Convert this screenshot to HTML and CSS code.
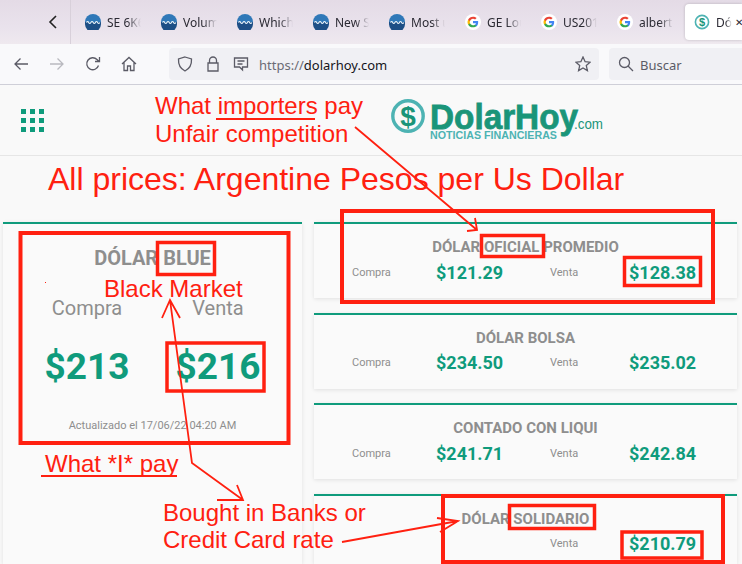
FILE: index.html
```html
<!DOCTYPE html>
<html lang="en">
<head>
  <meta charset="UTF-8">
  <title>DolarHoy</title>
  <link rel="stylesheet" href="styles.css">
</head>
<body>
  <svg width="0" height="0" class="defs">
    <symbol id="wave" viewBox="0 0 16 16">
      <circle cx="8" cy="8" r="8" fill="#2f78b8"/>
      <path d="M0 8h16v2a8 8 0 0 1-16 0z" fill="#1d4f86"/>
      <path d="M1.500 8.500q1.200-2 2.200 0t2.200 0 2.300 0 2.200 0 2.200 0 2.200 0" fill="none" stroke="#e8f4fb" stroke-width="1.200"/>
    </symbol>
    <symbol id="google" viewBox="0 0 18 18">
      <circle cx="9" cy="9" r="9" fill="#fff"/>
      <path d="M14.800 9.200c0-.4 0-.8-.1-1.200H9v2.300h3.300c-.1.800-.6 1.400-1.200 1.900v1.500h2c1.100-1.100 1.700-2.600 1.700-4.500z" fill="#4285f4"/>
      <path d="M9 15c1.600 0 3-.5 4.100-1.500l-2-1.500c-.6.400-1.300.6-2.100.6-1.600 0-2.900-1-3.400-2.500H3.500v1.600C4.500 13.700 6.600 15 9 15z" fill="#34a853"/>
      <path d="M5.600 10.600c-.3-.8-.3-1.700 0-2.500V6.500H3.500c-.9 1.700-.9 3.600 0 5.300z" fill="#fbbc05"/>
      <path d="M9 5.400c.9 0 1.700.3 2.300.9l1.800-1.800C12 3.500 10.500 3 9 3 6.600 3 4.500 4.300 3.500 6.500l2.100 1.600C6.100 6.500 7.400 5.400 9 5.400z" fill="#ea4335"/>
    </symbol>
  </svg>

  <div class="tabs">
    <div class="tabs-back">
      <svg width="12" height="14" viewBox="0 0 12 14"><path d="M9 1 3 7l6 6" fill="none" stroke="#222" stroke-width="1.600"/></svg>
    </div>
    <div class="tab"><svg class="fav"><use href="#wave"/></svg><span class="tab-name">SE 6K6</span></div>
    <div class="tab"><svg class="fav"><use href="#wave"/></svg><span class="tab-name">Volum</span></div>
    <div class="tab"><svg class="fav"><use href="#wave"/></svg><span class="tab-name">Which</span></div>
    <div class="tab"><svg class="fav"><use href="#wave"/></svg><span class="tab-name">New S</span></div>
    <div class="tab"><svg class="fav"><use href="#wave"/></svg><span class="tab-name">Most u</span></div>
    <div class="tab"><svg class="fav"><use href="#google"/></svg><span class="tab-name">GE Lou</span></div>
    <div class="tab"><svg class="fav"><use href="#google"/></svg><span class="tab-name">US201</span></div>
    <div class="tab"><svg class="fav"><use href="#google"/></svg><span class="tab-name">alberto</span></div>
    <div class="tab tab-active">
      <svg class="fav" viewBox="0 0 16 16"><circle cx="8" cy="8" r="6.600" fill="none" stroke="#4db3b3" stroke-width="1.600"/><text x="8" y="11.500" text-anchor="middle" class="fav-dollar">$</text></svg>
      <span class="tab-name">Dól</span>
      <span class="tab-close">✕</span>
    </div>
  </div>

  <div class="nav">
    <div class="nav-btns">
      <svg class="ico" viewBox="0 0 16 16"><path d="M15 8H2M7.500 2.500 2 8l5.500 5.500" class="line"/></svg>
      <svg class="ico ico-off" viewBox="0 0 16 16"><path d="M1 8h13M8.500 2.500 14 8l-5.500 5.500" class="line"/></svg>
      <svg class="ico" viewBox="0 0 16 16"><path d="M13.500 9.500A6 6 0 1 1 12 3.500l2 2M14.500 1v4.500H10" class="line"/></svg>
      <svg class="ico" viewBox="0 0 16 16"><path d="M1 8 8 1.500 15 8M3 6.500V14.500h3.500V10h3v4.500H13V6.500" class="line"/></svg>
    </div>
    <div class="urlbar">
      <svg class="ico" viewBox="0 0 16 16"><path d="M8 1 14.500 3c.3 5.500-1.500 9.500-6.500 12C3 12.500 1.200 8.500 1.500 3z" class="line"/></svg>
      <svg class="ico" viewBox="0 0 16 16"><path d="M4.500 7V4.500a3.500 3.500 0 0 1 7 0V7M3 7h10v8H3z" class="line"/></svg>
      <svg class="ico" viewBox="0 0 16 16"><path d="M1.500 2h13v9h-5v3l-3-3h-5zM4.500 5h7M4.500 8h5" class="line"/></svg>
      <span class="url"><span class="url-dim">https://</span>dolarhoy.com</span>
      <svg class="ico star" viewBox="0 0 16 16"><path d="M8 1l2.100 4.700 5 .5-3.800 3.400 1.100 5L8 12l-4.400 2.600 1.100-5L.9 6.200l5-.5z" class="line"/></svg>
    </div>
    <div class="searchbar">
      <svg class="ico" viewBox="0 0 16 16"><circle cx="6.500" cy="6.500" r="5" class="line"/><path d="M10 10l5 5" class="line"/></svg>
      <span class="search-text">Buscar</span>
    </div>
  </div>

  <header class="site-head">
    <div class="menu-grid">
      <i></i><i></i><i></i><i></i><i></i><i></i><i></i><i></i><i></i>
    </div>
    <svg class="logo" width="214" height="46" viewBox="0 0 214 46">
      <circle cx="17" cy="19" r="15.200" fill="none" stroke="#4db3b3" stroke-width="3.400"/>
      <text x="17" y="29" text-anchor="middle" class="logo-dollar">$</text>
      <text x="39" y="32" textLength="148" lengthAdjust="spacingAndGlyphs" class="logo-name">DolarHoy</text>
      <text x="39" y="42" textLength="127" lengthAdjust="spacingAndGlyphs" class="logo-sub">NOTICIAS FINANCIERAS</text>
      <text x="183" y="32" textLength="29" lengthAdjust="spacingAndGlyphs" class="logo-com">.com</text>
    </svg>
  </header>

  <main class="quotes">
    <section class="card card-main">
      <h2 class="card-title">DÓLAR BLUE</h2>
      <div class="main-grid">
        <span class="main-label">Compra</span>
        <span class="main-label">Venta</span>
        <span class="main-price">$213</span>
        <span class="main-price">$216</span>
      </div>
      <p class="updated">Actualizado el 17/06/22 04:20 AM</p>
    </section>

    <div class="card-list">
      <section class="card">
        <h3 class="card-title">DÓLAR OFICIAL PROMEDIO</h3>
        <div class="rates">
          <span class="rate-label">Compra</span><span class="rate-price">$121.29</span>
          <span class="rate-label">Venta</span><span class="rate-price">$128.38</span>
        </div>
      </section>
      <section class="card">
        <h3 class="card-title">DÓLAR BOLSA</h3>
        <div class="rates">
          <span class="rate-label">Compra</span><span class="rate-price">$234.50</span>
          <span class="rate-label">Venta</span><span class="rate-price">$235.02</span>
        </div>
      </section>
      <section class="card">
        <h3 class="card-title">CONTADO CON LIQUI</h3>
        <div class="rates">
          <span class="rate-label">Compra</span><span class="rate-price">$241.71</span>
          <span class="rate-label">Venta</span><span class="rate-price">$242.84</span>
        </div>
      </section>
      <section class="card">
        <h3 class="card-title">DÓLAR SOLIDARIO</h3>
        <div class="rates">
          <span></span><span></span>
          <span class="rate-label">Venta</span><span class="rate-price">$210.79</span>
        </div>
      </section>
    </div>
  </main>

  <!-- red notes drawn on top of the screenshot -->
  <svg class="notes" width="742" height="564" viewBox="0 0 742 564">
    <g class="note-box thick">
      <rect x="20.500" y="233" width="268" height="210"/>
      <rect x="342" y="211" width="371" height="91"/>
      <rect x="443" y="496" width="280" height="66"/>
    </g>
    <g class="note-box">
      <rect x="157.500" y="242.500" width="57" height="32"/>
      <rect x="167" y="343" width="97" height="48"/>
      <rect x="481.500" y="235.500" width="62" height="21"/>
      <rect x="624.500" y="257.500" width="76" height="28"/>
      <rect x="509.500" y="505.500" width="85" height="23"/>
      <rect x="622" y="532" width="80" height="26"/>
    </g>
    <g class="note-line">
      <path d="M216 119h99M41 476h136"/>
      <path d="M355 127 477 230M467 231l10-1-2-12"/>
      <path d="M170 300 192 463 243 500M162 318l8-18 10 18M237 485l6 15-26 0"/>
      <path d="M342 542l116-21M437 518l21 3-18 11"/>
    </g>
    <rect x="45" y="282" width="1" height="1" fill="#ff2010"/>
    <g class="note-text">
      <text x="155" y="114">What importers pay</text>
      <text x="155" y="142">Unfair competition</text>
      <text x="48" y="190" class="note-big">All prices: Argentine Pesos per Us Dollar</text>
      <text x="104" y="297">Black Market</text>
      <text x="45" y="472">What *I* pay</text>
      <text x="163" y="521">Bought in Banks or</text>
      <text x="163" y="548">Credit Card rate</text>
    </g>
  </svg>
</body>
</html>
```

FILE: styles.css
```css
html, body {
  margin: 0;
  padding: 0;
}
html {
  overflow: hidden;
}
body {
  position: relative;
  width: 742px;
  height: 564px;
  overflow: hidden;
  background-color: #f9f9f9;
  font-family: Roboto, "Liberation Sans", sans-serif;
}
.defs {
  position: absolute;
}

/* browser tabs */
.tabs {
  display: flex;
  align-items: center;
  height: 44px;
  background: linear-gradient(#e4dbe6, #e9e2ec 60%, #efe9ef);
  font-family: "Noto Sans", sans-serif;
  font-size: 12px;
  color: #2b2a33;
}
.tabs-back {
  display: flex;
  align-items: center;
  justify-content: center;
  box-sizing: border-box;
  width: 71px;
  height: 44px;
  padding-left: 36px;
  border-right: 1px solid #d8d0da;
}
.tab {
  display: flex;
  align-items: center;
  flex: none;
  gap: 6px;
  box-sizing: border-box;
  width: 76px;
  padding-left: 14px;
}
.fav {
  flex: none;
  width: 16px;
  height: 16px;
}
.fav-dollar {
  font: bold 11px "Liberation Sans", sans-serif;
  fill: #1a9579;
}
.tab-name {
  width: 34px;
  overflow: hidden;
  white-space: nowrap;
  -webkit-mask-image: linear-gradient(to right, #000 60%, transparent);
  mask-image: linear-gradient(to right, #000 60%, transparent);
}
.tab-active {
  position: relative;
  width: 57px;
  height: 36px;
  margin-left: 6px;
  padding-left: 9px;
  background-color: #fff;
  border-radius: 4px 0 0 4px;
  box-shadow: 0 0 3px rgba(0, 0, 0, .2);
}
.tab-active .tab-name {
  width: 16px;
}
.tab-close {
  position: absolute;
  right: -1px;
  font-size: 10px;
}

/* address bar */
.nav {
  display: flex;
  align-items: center;
  box-sizing: border-box;
  height: 41px;
  background-color: #f9f9fb;
  border-bottom: 1px solid #cfcfd8;
  font-family: "Noto Sans", sans-serif;
  font-size: 13px;
  color: #5b5b66;
}
.ico {
  flex: none;
  width: 16px;
  height: 16px;
}
.ico-off {
  opacity: .4;
}
.line {
  fill: none;
  stroke: #5b5b66;
  stroke-width: 1.300;
}
.nav-btns {
  display: flex;
  gap: 20px;
  width: 169px;
  padding-left: 13px;
  box-sizing: border-box;
}
.urlbar {
  display: flex;
  align-items: center;
  gap: 12px;
  box-sizing: border-box;
  width: 430px;
  height: 32px;
  padding: 0 8px;
  background-color: #f0f0f4;
  border-radius: 4px;
}
.url {
  flex: 1;
  margin-left: -2px;
  padding-top: 2px;
  color: #15141a;
}
.url-dim {
  color: #6b6b75;
}
.searchbar {
  display: flex;
  align-items: center;
  gap: 6px;
  box-sizing: border-box;
  width: 133px;
  height: 32px;
  margin-left: 10px;
  padding-left: 9px;
  background-color: #f0f0f4;
  border-radius: 4px 0 0 4px;
}
.search-text {
  padding-top: 2px;
}

/* site header */
.site-head {
  display: flex;
  align-items: center;
  box-sizing: border-box;
  height: 71px;
  padding: 0 0 0 21px;
  background-color: #f9f9f9;
  border-bottom: 1px solid #e6e6e6;
}
.menu-grid {
  display: grid;
  grid-template-columns: repeat(3, 5px);
  grid-template-rows: repeat(3, 5px);
  gap: 4px;
}
.menu-grid i {
  background-color: #0f9b7c;
}
.logo {
  margin-left: 347px;
}
.logo-dollar {
  font: bold 28px "Liberation Sans", sans-serif;
  fill: #1a9579;
}
.logo-name {
  font: bold 35px "Liberation Sans", sans-serif;
  fill: #1a9579;
  stroke: #1a9579;
  stroke-width: .8;
}
.logo-sub {
  font: bold 10px "Liberation Sans", sans-serif;
  fill: #4db3b3;
}
.logo-com {
  font: 14px "Liberation Sans", sans-serif;
  fill: #1a9579;
}

/* quotes */
.quotes {
  display: grid;
  grid-template-columns: 299px 423px;
  column-gap: 12px;
  align-items: start;
  padding: 66px 5px 0 3px;
}
.card-list {
  display: flex;
  flex-direction: column;
  gap: 14.670px;
}
.card {
  box-sizing: border-box;
  height: 76px;
  padding-top: 14px;
  background-color: #fafafa;
  border-top: 2px solid #0f9b7c;
  box-shadow: 0 1px 4px rgba(0, 0, 0, .1);
}
.card-list .card:last-child {
  height: 70px;
}
.card-title {
  margin: 0;
  font-size: 15px;
  line-height: 18px;
  font-weight: 700;
  text-align: center;
  color: #8e8e8e;
}
.rates {
  display: grid;
  grid-template-columns: 84px 114px 79px auto;
  align-items: center;
  height: 24px;
  margin-top: 4px;
  padding-left: 38px;
}
.rate-label {
  font-size: 11px;
  color: #8e8e8e;
}
.rate-price {
  font-size: 18px;
  font-weight: 700;
  color: #0f9b7c;
}
.card-main {
  height: 342px;
  padding-top: 22px;
}
.card-main .card-title {
  font-size: 20px;
  line-height: 24px;
}
.main-grid {
  display: grid;
  grid-template-columns: 131px 131px;
  grid-template-rows: 24px 44px;
  row-gap: 24px;
  justify-content: center;
  justify-items: center;
  align-items: center;
  margin-top: 26px;
}
.main-label {
  font-size: 20px;
  color: #8e8e8e;
}
.main-price {
  font-size: 37px;
  font-weight: 700;
  color: #0f9b7c;
}
.updated {
  margin: 31px 0 0;
  font-size: 11px;
  line-height: 14px;
  text-align: center;
  color: #8e8e8e;
}

/* annotations */
.notes {
  position: absolute;
  top: 0;
  left: 0;
}
.note-box {
  fill: none;
  stroke: #ff2010;
  stroke-width: 3.500;
}
.note-box.thick {
  stroke-width: 4;
}
.note-line {
  fill: none;
  stroke: #ff2010;
  stroke-width: 1.800;
}
.note-text {
  font-family: "Liberation Sans", sans-serif;
  font-size: 24px;
  fill: #ff2010;
}
.note-big {
  font-size: 32px;
}
```
